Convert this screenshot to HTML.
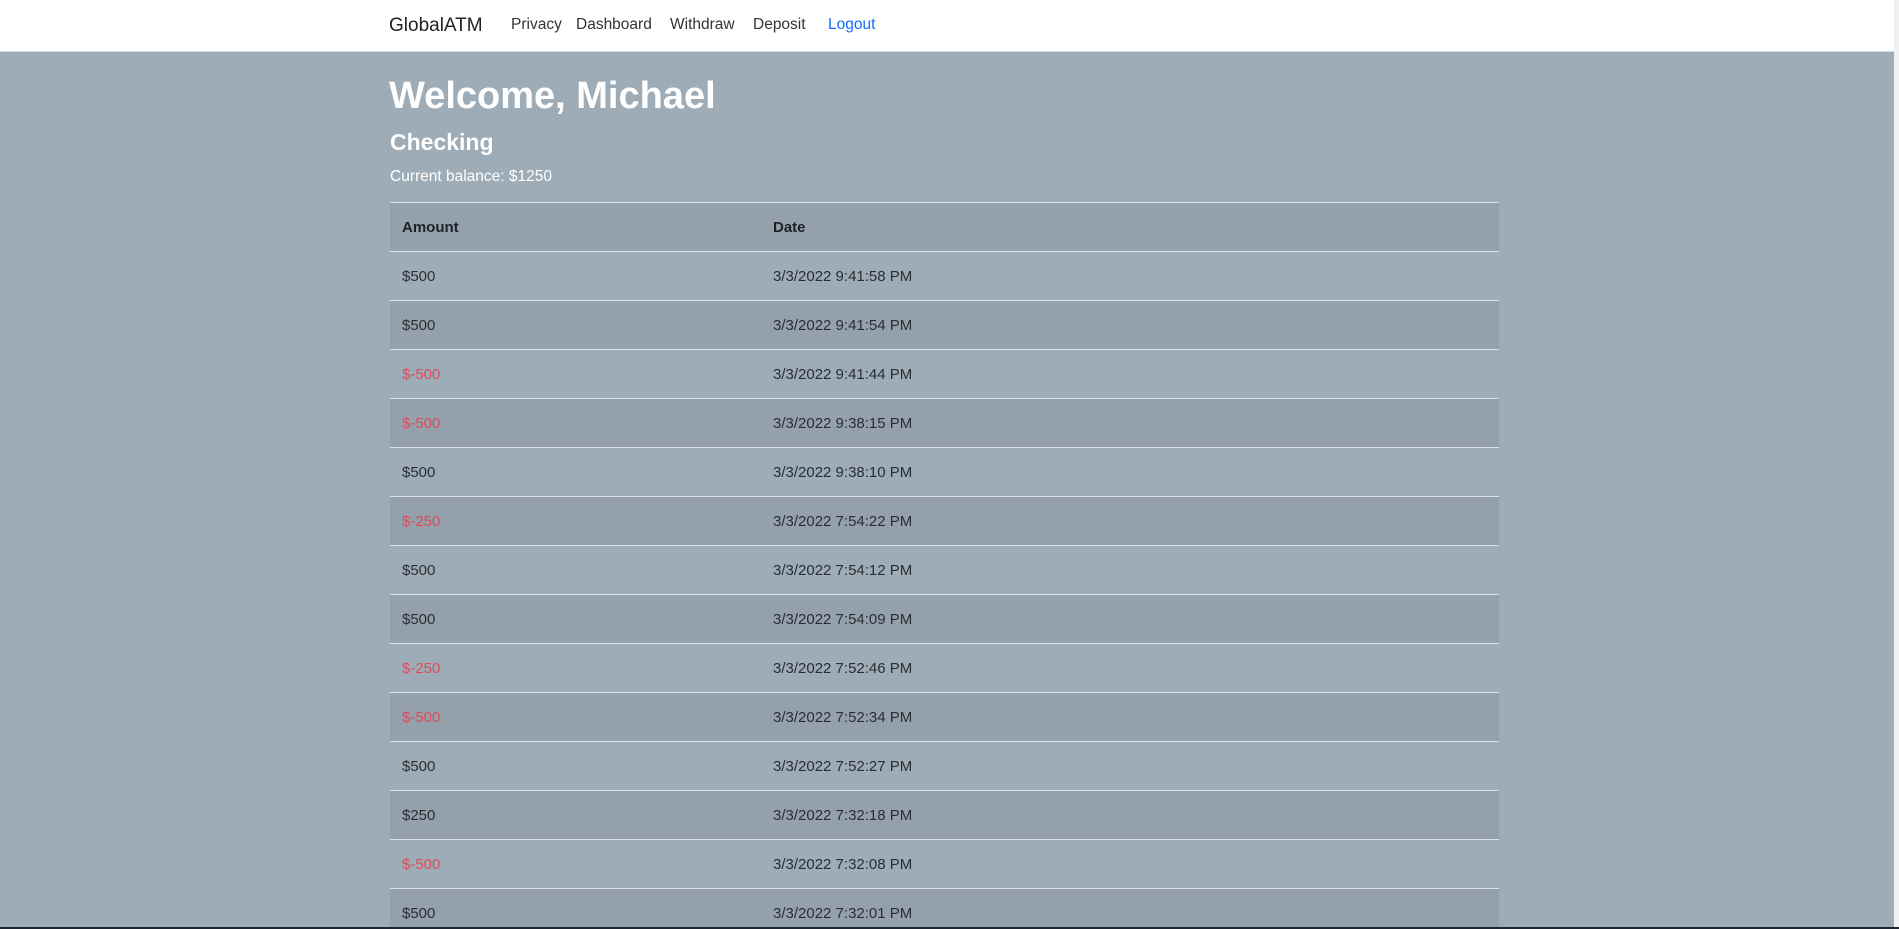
<!DOCTYPE html>
<html><head><meta charset="utf-8"><style>
*{box-sizing:border-box;margin:0;padding:0}
html,body{width:1899px;height:929px;overflow:hidden}
body{background:#9eacb7;font-family:"Liberation Sans","DejaVu Sans",sans-serif;color:#212529;position:relative}
.nav{position:absolute;left:0;top:0;width:1894px;height:52px;background:#fff;border-bottom:1px solid #d8dde2}
.nav span{position:absolute;top:16px;font-size:15.5px;color:#333}
.nav .brand{font-size:19px;top:15px;color:#222}
.nav .lo{color:#0d6efd}
h1{position:absolute;left:389px;top:75px;font-size:38px;color:#fff;font-weight:bold}
h3{position:absolute;left:390px;top:129px;font-size:23px;color:#fff;font-weight:bold}
.bal{position:absolute;left:390px;top:168px;font-size:15.5px;color:#fff}
table{position:absolute;left:390px;top:202px;width:1109px;border-collapse:collapse;font-size:15px}
td,th{height:49px;border-top:1px solid #dfe3e8;padding:0 0 0 12px;text-align:left;vertical-align:middle}
th{font-weight:bold;background:#94a1ad;color:#1d2126}
td:first-child,th:first-child{width:371px}
tr:nth-child(odd) td{background:#94a1ad}
td{color:#2a2e33}
.r{color:#e04b58!important}
.sb{position:absolute;right:0;top:0;width:5px;height:929px;background:#f1f1f1}
.bt{position:absolute;left:0;bottom:0;width:1899px;height:2px;background:#1d2533}
</style></head><body>
<div class="nav">
<span class="brand" style="left:389px">GlobalATM</span>
<span style="left:511px">Privacy</span>
<span style="left:576px">Dashboard</span>
<span style="left:670px">Withdraw</span>
<span style="left:753px">Deposit</span>
<span class="lo" style="left:828px">Logout</span>
</div>
<h1>Welcome, Michael</h1>
<h3>Checking</h3>
<div class="bal">Current balance: $1250</div>
<table>
<tr><th>Amount</th><th>Date</th></tr>
<tr><td>$500</td><td>3/3/2022 9:41:58 PM</td></tr>
<tr><td>$500</td><td>3/3/2022 9:41:54 PM</td></tr>
<tr><td class="r">$-500</td><td>3/3/2022 9:41:44 PM</td></tr>
<tr><td class="r">$-500</td><td>3/3/2022 9:38:15 PM</td></tr>
<tr><td>$500</td><td>3/3/2022 9:38:10 PM</td></tr>
<tr><td class="r">$-250</td><td>3/3/2022 7:54:22 PM</td></tr>
<tr><td>$500</td><td>3/3/2022 7:54:12 PM</td></tr>
<tr><td>$500</td><td>3/3/2022 7:54:09 PM</td></tr>
<tr><td class="r">$-250</td><td>3/3/2022 7:52:46 PM</td></tr>
<tr><td class="r">$-500</td><td>3/3/2022 7:52:34 PM</td></tr>
<tr><td>$500</td><td>3/3/2022 7:52:27 PM</td></tr>
<tr><td>$250</td><td>3/3/2022 7:32:18 PM</td></tr>
<tr><td class="r">$-500</td><td>3/3/2022 7:32:08 PM</td></tr>
<tr><td>$500</td><td>3/3/2022 7:32:01 PM</td></tr>
</table>
<div class="sb"></div>
<div class="bt"></div>
</body></html>
